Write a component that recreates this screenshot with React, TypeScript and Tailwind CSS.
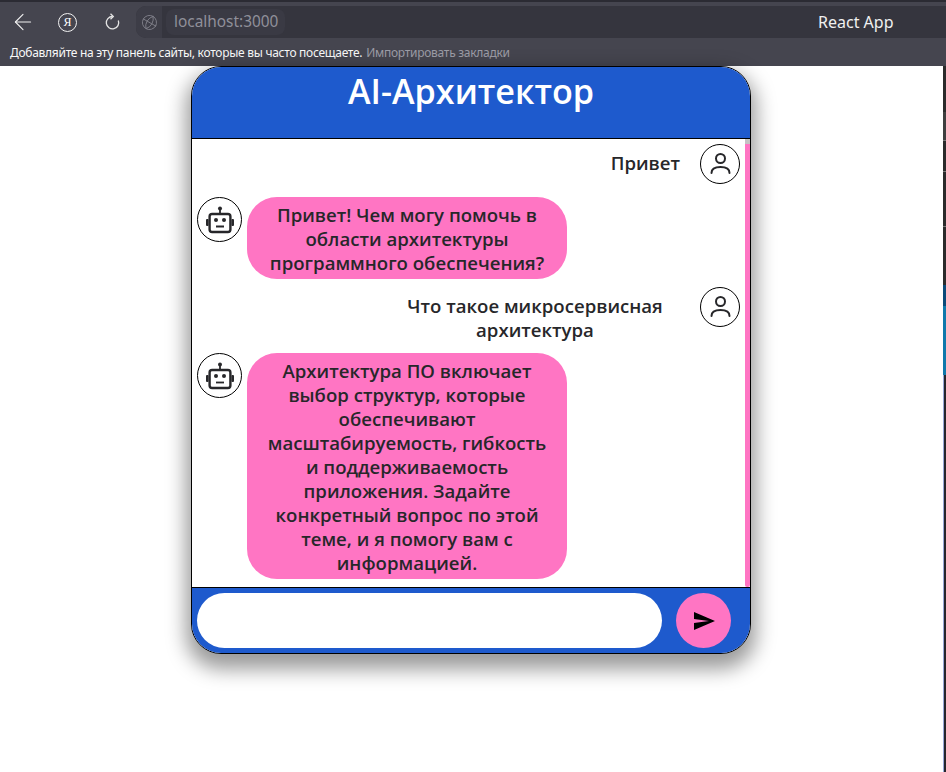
import { ArrowLeft, Globe } from "lucide-react";
import { MdSend } from "react-icons/md";

const UserIcon = () => (
  <svg viewBox="0 0 30 30" fill="none" stroke="#27272a" strokeWidth="2" strokeLinecap="round" className="size-[30px]">
    <circle cx="15.5" cy="9.5" r="4.5" />
    <path d="M6.5 24c0-4 3.5-6 9-6s9 2 9 6" />
  </svg>
);

const BotIcon = () => (
  <svg viewBox="0 0 28 28" fill="none" className="size-[28px]">
    <circle cx="14" cy="2.5" r="2" fill="#27272a" />
    <path d="M14 3v5" stroke="#27272a" strokeWidth="1.8" />
    <rect x="3.6" y="8" width="20.8" height="18" rx="2.5" stroke="#27272a" strokeWidth="2.4" />
    <rect x="0" y="13" width="2.6" height="7" rx="1" fill="#27272a" />
    <rect x="25.4" y="13" width="2.6" height="7" rx="1" fill="#27272a" />
    <circle cx="10" cy="14" r="2" fill="#27272a" />
    <circle cx="18" cy="14" r="2" fill="#27272a" />
    <path d="M10 20.5h8" stroke="#27272a" strokeWidth="1.8" />
  </svg>
);

const Avatar = ({ children, size }: { children: React.ReactNode; size: string }) => (
  <div className={`${size} shrink-0 rounded-full border border-black bg-white flex items-center justify-center`}>
    {children}
  </div>
);

const UserMessage = ({ text, textWidth }: { text: string; textWidth: string }) => (
  <div className="flex justify-end items-start gap-[20px] pr-[5px]">
    <div className={`${textWidth} pt-[7px] pb-[3px] text-center`}>{text}</div>
    <div className="pb-[5px]">
      <Avatar size="size-[40px]">
        <UserIcon />
      </Avatar>
    </div>
  </div>
);

const BotMessage = ({ text }: { text: string }) => (
  <div className="flex items-start gap-[5px] pl-[5px]">
    <Avatar size="size-[45px]">
      <BotIcon />
    </Avatar>
    <div className="w-[320px] rounded-[30px] bg-[#ff75c3] px-[16px] pt-[6px] pb-[4px] text-center">{text}</div>
  </div>
);

const App = () => {
  return (
    <div className="w-[946px] h-[772px] overflow-hidden bg-white flex flex-col font-['Open_Sans','Noto_Sans',sans-serif]">
      {/* browser chrome */}
      <div className="h-[66px] shrink-0 bg-[#45454f] text-white flex flex-col">
        <div className="h-[2px] bg-[#2b2b33]" />
        <div className="h-[40px] flex items-center">
          <ArrowLeft className="ml-[10px] size-[26px]" strokeWidth={1} color="#f2f2f2" />
          <div className="ml-[22px] size-[19px] rounded-full border border-[#f2f2f2] flex items-center justify-center text-[12px] leading-none font-['Liberation_Serif',serif]">
            Я
          </div>
          <svg viewBox="0 0 18 18" fill="none" stroke="#e5e5e5" strokeWidth="1.3" className="ml-[26px] size-[18px]">
            <path d="M9.5 3.5a6.2 6.2 0 1 0 5.8 4" />
            <path d="M7.5 0.8 10.3 3.5 7.5 6.2" />
          </svg>
          <div className="ml-[15px] flex-1 h-[32px] rounded-l-[10px] bg-[#35353e] flex items-center">
            <div className="w-[26px] h-full rounded-l-[10px] bg-[#3d3d47] flex items-center justify-center">
              <Globe className="size-[17px] rotate-[30deg]" strokeWidth={1.2} color="#80808a" />
            </div>
            <div className="ml-[4px] h-[26px] w-[119px] rounded-[8px] bg-[#3a3a44] pl-[8px] text-[15.4px] leading-[26px] text-[#90909a] font-['Noto_Sans',sans-serif]">
              localhost:3000
            </div>
            <div className="ml-[533px] text-[16px] text-[#f0f0f0] font-['Noto_Sans',sans-serif]">React App</div>
          </div>
        </div>
        <div className="h-[24px] pb-[2px] pl-[10px] flex items-center text-[12px] tracking-[-0.28px] whitespace-nowrap font-['Noto_Sans',sans-serif]">
          <span className="text-[#f8f8f8]">Добавляйте на эту панель сайты, которые вы часто посещаете.</span>
          <span className="ml-[4px] text-[#9c9ca6]">Импортировать закладки</span>
        </div>
      </div>

      {/* page */}
      <div className="flex-1 relative flex justify-center">
        <div className="ml-[-4px] w-[560px] h-[588px] rounded-[30px] border border-black overflow-hidden bg-white flex flex-col shadow-[0_10px_20px_5px_rgba(0,0,0,0.4)]">
          <div className="h-[72px] shrink-0 bg-[#1e5acd] border-b border-black text-center">
            <h1 className="text-[34.2px] leading-[48px] font-semibold text-white">AI-Архитектор</h1>
          </div>

          <div className="flex-1 min-h-0 flex">
            <div className="flex-1 pt-[5px] flex flex-col gap-[8px] text-[18.6px] leading-[24px] font-semibold text-[#27272a]">
              <UserMessage text="Привет" textWidth="" />
              <BotMessage text="Привет! Чем могу помочь в области архитектуры программного обеспечения?" />
              <UserMessage text="Что такое микросервисная архитектура" textWidth="w-[290px]" />
              <BotMessage text="Архитектура ПО включает выбор структур, которые обеспечивают масштабируемость, гибкость и поддерживаемость приложения. Задайте конкретный вопрос по этой теме, и я помогу вам с информацией." />
            </div>
            <div className="w-[5px] flex flex-col">
              <div className="h-[5px] bg-[#c4c4c4]" />
              <div className="flex-1 bg-[#ff75c3] rounded-b-[2px]" />
            </div>
          </div>

          <div className="h-[66px] shrink-0 bg-[#1e5acd] border-t border-black flex items-center pl-[5px]">
            <input className="w-[465px] h-[55px] rounded-full bg-white outline-none" />
            <button className="ml-[14px] size-[55px] rounded-full bg-[#ff75c3] flex items-center justify-center">
              <MdSend className="size-[24px] text-black" />
            </button>
          </div>
        </div>

        {/* neighbouring window peeking in at the right edge */}
        <div className="absolute right-0 inset-y-0 w-[3px] flex flex-col bg-[#2b2b2b]">
          <div className="h-[46px] shrink-0" />
          <div className="h-[28px] shrink-0 bg-[#3f3f3f]" />
          <div className="h-[31px] shrink-0 border-t border-[#777]" />
          <div className="h-[55px] shrink-0 border-t border-[#777]" />
          <div className="h-[59px] shrink-0 border-t border-[#777]" />
          <div className="h-[21px] shrink-0 bg-[#0b4a7a]" />
          <div className="h-[69px] shrink-0 bg-[#1079ac]" />
          <div className="flex-1 border-l border-[#98a8d8] bg-[#26262c]" />
        </div>
      </div>
    </div>
  );
};

export default App;
